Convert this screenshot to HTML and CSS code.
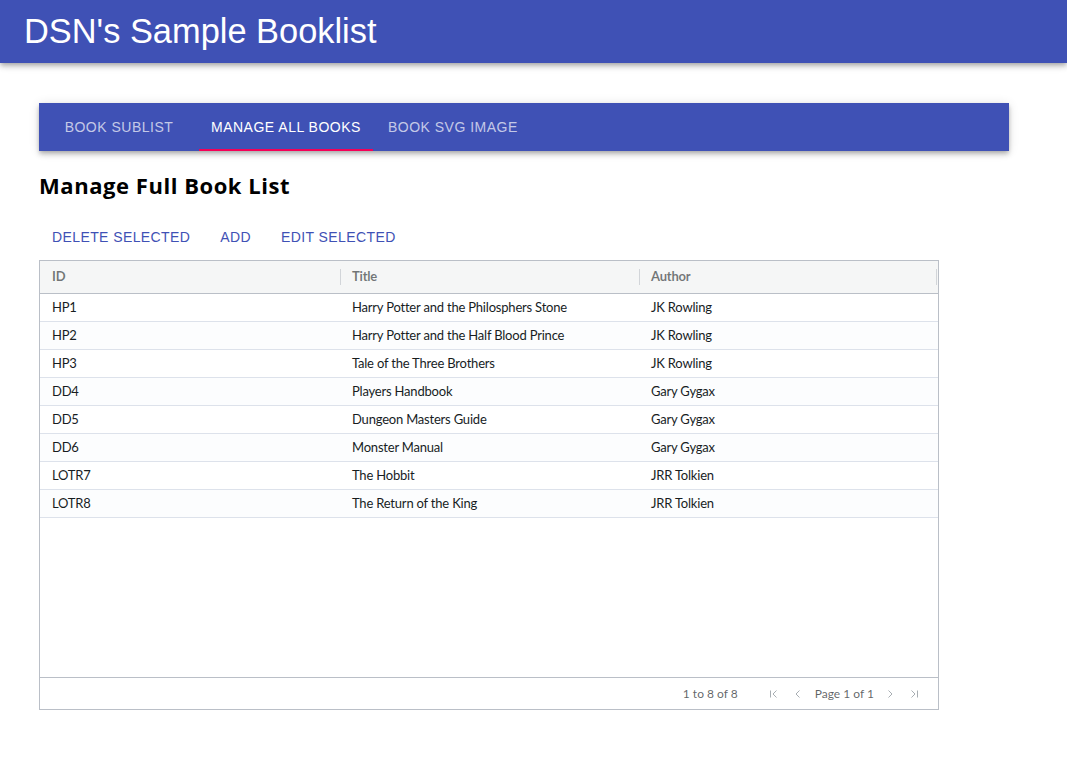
FILE: index.html
```html
<!DOCTYPE html>
<html>
<head>
<meta charset="utf-8">
<link rel="stylesheet" href="styles.css">
</head>
<body>
<header class="appbar"><h1 class="apptitle">DSN's Sample Booklist</h1></header>
<main class="content">
  <nav class="tabs">
    <div class="tab">Book Sublist</div>
    <div class="tab active">Manage All Books</div>
    <div class="tab">Book SVG Image</div>
  </nav>
  <h2 class="heading">Manage Full Book List</h2>
  <div class="actions">
    <button class="btn">Delete Selected</button>
    <button class="btn">Add</button>
    <button class="btn">Edit Selected</button>
  </div>
  <div class="grid">
    <div class="grid-header">
      <div class="hcell">ID</div>
      <div class="hcell sep">Title</div>
      <div class="hcell sep">Author</div>
      <div class="hcell-end"></div>
    </div>
    <div class="grid-body">
      <div class="row"><div class="cell">HP1</div><div class="cell">Harry Potter and the Philosphers Stone</div><div class="cell">JK Rowling</div></div>
      <div class="row odd"><div class="cell">HP2</div><div class="cell">Harry Potter and the Half Blood Prince</div><div class="cell">JK Rowling</div></div>
      <div class="row"><div class="cell">HP3</div><div class="cell">Tale of the Three Brothers</div><div class="cell">JK Rowling</div></div>
      <div class="row odd"><div class="cell">DD4</div><div class="cell">Players Handbook</div><div class="cell">Gary Gygax</div></div>
      <div class="row"><div class="cell">DD5</div><div class="cell">Dungeon Masters Guide</div><div class="cell">Gary Gygax</div></div>
      <div class="row odd"><div class="cell">DD6</div><div class="cell">Monster Manual</div><div class="cell">Gary Gygax</div></div>
      <div class="row"><div class="cell">LOTR7</div><div class="cell">The Hobbit</div><div class="cell">JRR Tolkien</div></div>
      <div class="row odd"><div class="cell">LOTR8</div><div class="cell">The Return of the King</div><div class="cell">JRR Tolkien</div></div>
    </div>
    <div class="paging">
      <span class="summary">1 to 8 of 8</span>
      <svg class="picon gap" width="12" height="12" viewBox="0 0 12 12"><path d="M2.5 2.5v7M8.5 2.5L5 6l3.5 3.5" fill="none" stroke="#a8aeb3" stroke-width="1"/></svg>
      <svg class="picon" width="12" height="12" viewBox="0 0 12 12"><path d="M7.5 2.5L4 6l3.5 3.5" fill="none" stroke="#a8aeb3" stroke-width="1"/></svg>
      <span class="pagetext">Page 1 of 1</span>
      <svg class="picon gap" width="12" height="12" viewBox="0 0 12 12"><path d="M4.5 2.5L8 6 4.5 9.5" fill="none" stroke="#a8aeb3" stroke-width="1"/></svg>
      <svg class="picon" width="12" height="12" viewBox="0 0 12 12"><path d="M3.5 2.5L7 6 3.5 9.5M9.5 2.5v7" fill="none" stroke="#a8aeb3" stroke-width="1"/></svg>
    </div>
  </div>
</main>
</body>
</html>
```
FILE: styles.css
```css
* { box-sizing: border-box; }
body { margin: 0; background: #fff; font-family: "Lato", "Noto Sans", sans-serif; }
.appbar {
  height: 63px;
  background: #3f51b5;
  box-shadow: 0 2px 4px -1px rgba(0,0,0,0.2), 0 4px 5px 0 rgba(0,0,0,0.14), 0 1px 10px 0 rgba(0,0,0,0.12);
  display: flex;
  align-items: center;
  padding-left: 24px;
}
.apptitle {
  margin: 0;
  font-family: "Liberation Sans", Arial, sans-serif;
  font-weight: 400;
  font-size: 34.4px;
  color: #fff;
  line-height: 1;
  padding-bottom: 1px;
}
.content { padding: 40px 39px; }
.tabs {
  width: 970px;
  height: 48px;
  background: #3f51b5;
  display: flex;
  box-shadow: 0 2px 4px -1px rgba(0,0,0,0.2), 0 4px 5px 0 rgba(0,0,0,0.14), 0 1px 10px 0 rgba(0,0,0,0.12);
}
.tab {
  min-width: 160px;
  padding: 0 12px;
  display: flex;
  align-items: center;
  justify-content: center;
  text-transform: uppercase;
  font-family: "Liberation Sans", Arial, sans-serif;
  font-size: 14px;
  letter-spacing: 0.5px;
  color: rgba(255,255,255,0.7);
  border-bottom: 2px solid transparent;
  padding-top: 2px;
}
.tab.active { color: #fff; border-bottom-color: #f50057; }
.heading {
  margin: 20px 0 0;
  font-family: "Open Sans", "Lato", sans-serif;
  font-size: 22px;
  letter-spacing: 0.55px;
  font-weight: 700;
  color: #000;
  line-height: 28px;
}
.actions { display: flex; gap: 14px; margin-top: 20px; padding-left: 5px; }
.btn {
  border: 0;
  background: none;
  padding: 6px 8px;
  font-family: "Liberation Sans", Arial, sans-serif;
  font-size: 14px;
  letter-spacing: 0.4px;
  text-transform: uppercase;
  color: #3f51b5;
  line-height: 24px;
}
.grid {
  margin-top: 5px;
  width: 900px;
  height: 450px;
  border: 1px solid #babfc7;
  display: flex;
  flex-direction: column;
  font-size: 13px;
  letter-spacing: -0.2px;
  color: #181d1f;
}
.grid-header {
  height: 33px;
  background: #f5f6f6;
  border-bottom: 1px solid #babfc7;
  display: grid;
  grid-template-columns: 300px 299px 297px 2px;
  align-items: center;
}
.hcell {
  padding-left: 12px;
  padding-bottom: 3px;
  font-weight: 700;
  color: rgba(24,29,31,0.6);
  position: relative;
  height: 100%;
  display: flex;
  align-items: center;
}
.hcell.sep::before {
  content: "";
  position: absolute;
  left: 0;
  top: 8px;
  height: 16px;
  width: 1px;
  background: rgba(186,191,199,0.6);
}
.hcell-end { height: 16px; border-left: 1px solid rgba(186,191,199,0.6); }
.grid-body { flex: 1; }
.row {
  height: 28px;
  display: grid;
  grid-template-columns: 300px 299px 299px;
  border-bottom: 1px solid #dde2eb;
  align-items: center;
  padding-bottom: 1px;
}
.row.odd { background: #fcfdfe; }
.cell { padding-left: 12px; white-space: nowrap; }
.paging {
  height: 32px;
  border-top: 1px solid #babfc7;
  display: flex;
  align-items: center;
  justify-content: flex-end;
  padding-right: 18px;
  font-size: 12px;
  letter-spacing: 0;
  color: rgba(24,29,31,0.7);
}
.summary { margin-right: 30px; }
.picon { display: block; }
.picon.gap { margin-right: 12px; }
.pagetext { margin: 0 10px 0 11px; }
```
